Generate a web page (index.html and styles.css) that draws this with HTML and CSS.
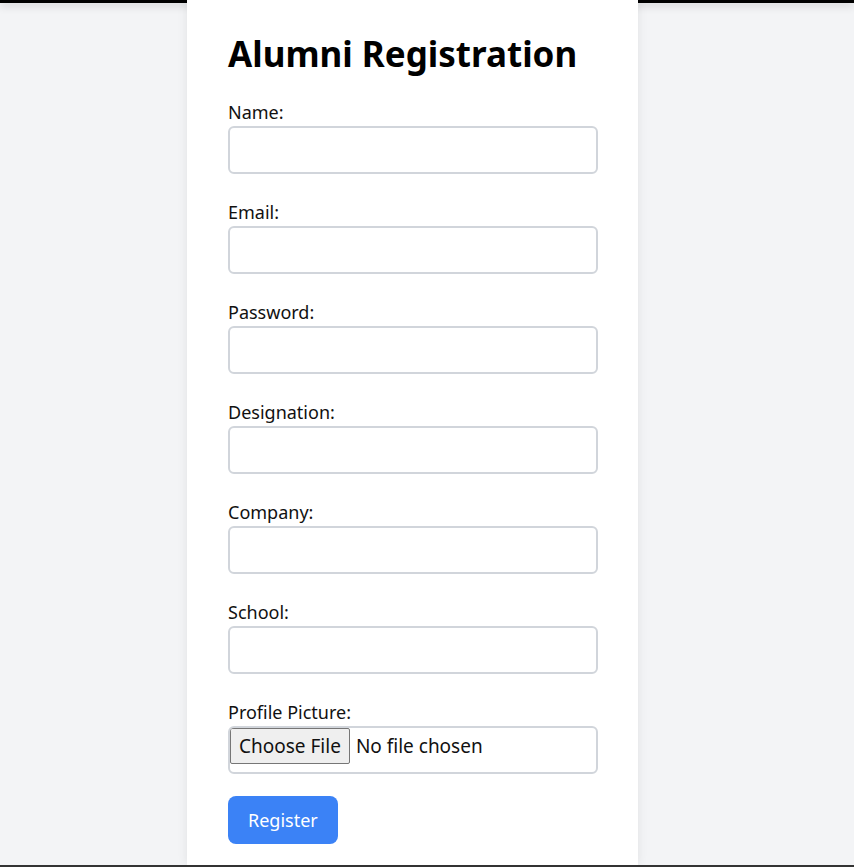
FILE: index.html
```html
<!DOCTYPE html>
<html lang="en">
<head>
<meta charset="utf-8">
<title>Alumni Registration</title>
<link rel="stylesheet" href="styles.css">
</head>
<body>
<div class="topbar"></div>
<main class="card">
  <h1 class="title">Alumni Registration</h1>
  <form class="form">
    <div class="field">
      <label class="label" for="name">Name:</label>
      <input class="input" id="name" type="text">
    </div>
    <div class="field">
      <label class="label" for="email">Email:</label>
      <input class="input" id="email" type="email">
    </div>
    <div class="field">
      <label class="label" for="password">Password:</label>
      <input class="input" id="password" type="password">
    </div>
    <div class="field">
      <label class="label" for="designation">Designation:</label>
      <input class="input" id="designation" type="text">
    </div>
    <div class="field">
      <label class="label" for="company">Company:</label>
      <input class="input" id="company" type="text">
    </div>
    <div class="field">
      <label class="label" for="school">School:</label>
      <input class="input" id="school" type="text">
    </div>
    <div class="field">
      <label class="label" for="pic">Profile Picture:</label>
      <input class="input file" id="pic" type="file">
    </div>
    <button class="btn" type="button">Register</button>
  </form>
</main>
<div class="bottombar"></div>
</body>
</html>
```
FILE: styles.css
```css
html, body {
  margin: 0;
  padding: 0;
}
body {
  background: #f3f4f6;
  font-family: "Noto Sans", "Open Sans", sans-serif;
  color: #111;
  height: 867px;
  overflow: hidden;
  display: flex;
  flex-direction: column;
}
.topbar {
  height: 3px;
  background: #000;
  box-shadow: 0 2px 8px rgba(0,0,0,0.25);
  flex: none;
}
.card {
  position: relative;
  z-index: 1;
  margin-top: -3px;
  margin-left: 187px;
  width: 451px;
  box-sizing: border-box;
  height: 865px;
  flex: none;
  background: #fff;
  padding: 24px 41px 0 41px;
  box-shadow: 0 0 10px rgba(0,0,0,0.08);
}
.title {
  margin: 0 0 15px 0;
  font-size: 35px;
  line-height: 60px;
  font-weight: 700;
  color: #000;
}
.form {
  display: flex;
  flex-direction: column;
}
.field {
  display: flex;
  flex-direction: column;
  margin-bottom: 25px;
}
.label {
  font-size: 18px;
  line-height: 27px;
  color: #111;
}
.input {
  box-sizing: border-box;
  width: 370px;
  height: 48px;
  border: 2px solid #d1d5db;
  border-radius: 6px;
  background: #fff;
  font-family: inherit;
  font-size: 18px;
  padding: 0 8px;
  margin: 0;
  outline: none;
}
.file {
  padding: 0;
  font-size: 19px;
  color: #111;
}
.file::file-selector-button {
  font-family: inherit;
  font-size: 19px;
  height: 36px;
  margin: 0 6px 0 0;
  padding: 0 8px;
  border: 1px solid #767676;
  border-radius: 2px;
  background: #efefef;
  color: #111;
}
.btn {
  align-self: flex-start;
  margin-top: -3px;
  height: 48px;
  padding: 0 20px;
  border: none;
  border-radius: 8px;
  background: #3b82f6;
  color: #fff;
  font-family: inherit;
  font-size: 18px;
}
.bottombar {
  height: 2px;
  background: #333;
  flex: none;
  position: relative;
  z-index: 2;
}
```
